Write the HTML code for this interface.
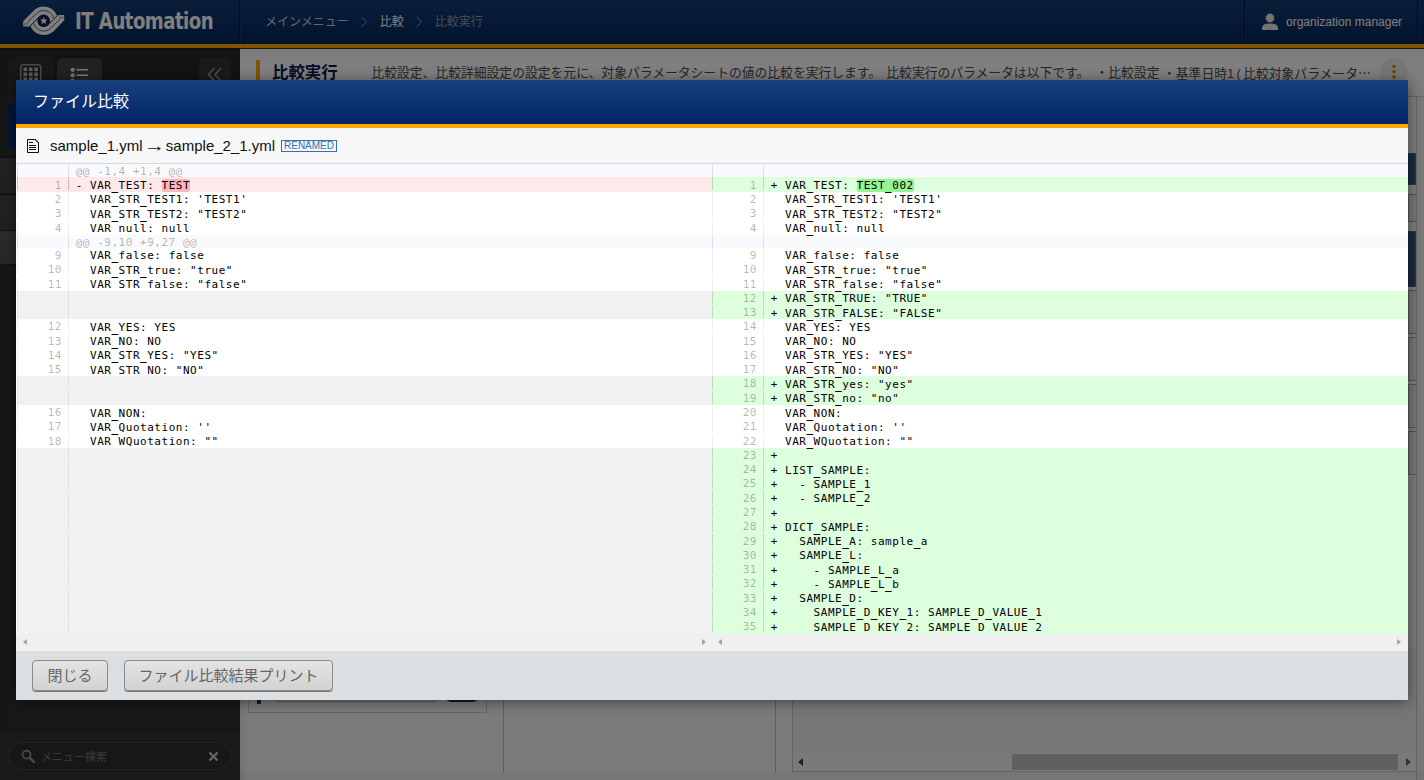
<!DOCTYPE html>
<html lang="ja">
<head>
<meta charset="utf-8">
<title>IT Automation - 比較実行</title>
<style>
*{box-sizing:border-box;margin:0;padding:0}
html,body{width:1424px;height:780px;overflow:hidden;background:#f2f2f2;font-family:"Liberation Sans","Noto Sans CJK JP",sans-serif;}
#page{position:relative;width:1424px;height:780px;overflow:hidden}
/* ---------- background application ---------- */
#hdr{position:absolute;left:0;top:0;width:1424px;height:48px;background:linear-gradient(#163e74,#02265e 44px);border-bottom:4px solid #ffaa00}
#hdr .logoBox{position:absolute;left:0;top:0;width:241px;height:44px;border-right:1px solid #1a3868;box-shadow:inset -2px 0 0 -1px #011a40}
#hdr .logoTxt{position:absolute;left:75px;top:7px;font:bold 23px/28px "DejaVu Sans Condensed","Liberation Sans",sans-serif;color:#fff;letter-spacing:-.6px;white-space:nowrap;transform-origin:0 50%;transform:scaleX(.877)}
#crumb{position:absolute;left:265px;top:12px;font-size:12px;line-height:20px;color:#c8d0dc;white-space:nowrap}
#crumb span{display:inline-block;vertical-align:top}
#crumb .sep{margin:4px 12px 0 11px;height:12px;line-height:0}
#crumb .cur{color:#8d9ab2}
#crumb .mid{color:#fff}
#user{position:absolute;left:1244px;top:0;width:174px;height:44px;border-left:1px solid #011a40;border-right:1px solid #011a40;box-shadow:inset 1px 0 0 #1a3868,1px 0 0 #1a3868}
#user .nm{position:absolute;left:41px;top:13px;font-size:12px;line-height:18px;color:#fff;white-space:nowrap}
#side{position:absolute;left:0;top:48px;width:240px;height:732px;background:#282828}
#side .topbar{position:absolute;left:0;top:0;width:240px;height:49px;background:#262626;border-top:1px solid #161616}
#side .tb{position:absolute;top:10px;height:40px;width:45px;border-radius:5px 5px 0 0}
#side .menu{position:absolute;left:0;top:49px;width:240px;height:636px;background:linear-gradient(90deg,#2a2a2a,#303030 12px)}
#side .nv{position:absolute;left:8px;top:57px;width:224px;height:43px;background:#002a6c}
#side .mi{position:absolute;left:0;top:0;width:240px;height:36px;background:linear-gradient(#464646,#404040);border-top:1px solid #1c1c1c}
#side .mi.on{background:linear-gradient(#585858,#505050);height:35px;border-bottom:1px solid #222}
#side .sfoot{position:absolute;left:0;top:684px;width:240px;height:48px;background:#343434}
#side .search{position:absolute;left:8px;top:694px;width:223px;height:28px;border:1px solid #464646;border-radius:14px;background:#2e2e2e}
#side .search .ph{position:absolute;left:32px;top:5px;font-size:11px;line-height:18px;color:#777}
#main{position:absolute;left:240px;top:48px;width:1184px;height:732px;background:#f6f6f6}
#main .lsh{position:absolute;left:0;top:0;width:8px;height:732px;background:linear-gradient(90deg,rgba(0,0,0,.07),rgba(0,0,0,0))}
#main .chead{position:absolute;left:0;top:0;width:1184px;height:49px;background:linear-gradient(#f4f4f4,#fff 14px,#f4f4f4);border-bottom:1px solid #ccc;border-top:1px solid #2a2a2a}
#main .ttlbar{position:absolute;left:16px;top:12px;width:4px;height:30px;background:#ffaa00}
#main .ttl{position:absolute;left:32px;top:12px;font-weight:bold;font-size:16.4px;line-height:24px;color:#001a50;white-space:nowrap}
#main .desc{position:absolute;left:131.4px;top:15px;font-size:12.8px;line-height:20px;color:#4a4a4a;white-space:nowrap;width:1010px;height:20px}
#main .desc span{position:absolute;top:0}
#main .desc b{font-weight:normal;letter-spacing:2.4px}
#main .desc i{font-style:normal;font-family:"Noto Sans CJK JP",sans-serif}
#main .dots{position:absolute;left:1140px;top:10px;width:28px;height:28px;border-radius:14px;background:#ececec}
#main .dots i{display:block;width:3.4px;height:3.4px;border-radius:2px;background:#e59a00;margin:0 auto 1.7px;position:relative;top:7px}
#main .rb1{position:absolute;left:1168px;width:8px;background:#33507f;border:1px solid #4f6a96;border-left:0}
#main .rbo{position:absolute;left:1168px;width:8px;border:1px solid #aaa;border-right:0;background:#ebebeb}
#main .rcol{position:absolute;left:1176px;top:49px;width:8px;height:683px;background:#f0f0f0;border-left:1px solid #c8c8c8}
#main .box1{position:absolute;left:8px;top:600px;width:239px;height:65px;border:1px solid #ccc}
#main .nm1{position:absolute;left:17px;top:640px;width:4px;height:16px;background:#1d3c70}
#main .in1{position:absolute;left:33px;top:630px;width:165px;height:24px;border:1px solid #bbb;border-radius:4px}
#main .bt1{position:absolute;left:206px;top:630px;width:32px;height:24px;border-radius:5px;background:#333}
#main .vl{position:absolute;top:600px;width:1px;height:124px;background:#b8b8b8}
#main .rp{position:absolute;left:552px;top:600px;width:625px;height:124px;border:1px solid #c4c4c4;border-top:0;background:#ececec}
#main .rp .hs{position:absolute;left:0;bottom:0;width:623px;height:18px;background:#f5f5f5}
#main .rp .hs .th{position:absolute;left:219px;top:1px;width:386px;height:16px;background:#c1c1c1}
#main .rp .hs .a1{position:absolute;left:5px;top:5px;border:4px solid transparent;border-right:5px solid #404040;border-left:0}
#main .rp .hs .a2{position:absolute;right:5px;top:5px;border:4px solid transparent;border-left:5px solid #606060;border-right:0}
#main .bband{position:absolute;left:0;top:724px;width:1184px;height:8px;background:rgba(0,0,0,.035)}
#ovl{position:absolute;left:0;top:0;width:1424px;height:780px;background:rgba(0,0,0,.5)}
/* ---------- modal ---------- */
#modal{position:absolute;left:16px;top:80px;width:1392px;height:620px;background:#f0f0f0;box-shadow:0 2px 12px rgba(0,0,0,.45)}
#mh{position:absolute;left:0;top:0;width:1392px;height:48px;background:linear-gradient(#18407a,#00246a 44px);border-bottom:4px solid #ffa500}
#mh .t{position:absolute;left:17px;top:10px;font-size:16px;line-height:24px;color:#fff;white-space:nowrap}
#fh{position:absolute;left:0;top:48px;width:1392px;height:36px;background:#f7f7f7;border-bottom:1px solid #d8d8d8}
#fh svg{position:absolute;left:11px;top:10px}
#fh .fn{position:absolute;left:34px;top:8px;font:15px/20px "Liberation Sans",sans-serif;color:#111;white-space:nowrap}
#fh .arw{display:inline-block;transform:scale(1.42,1.25);transform-origin:50% 62%}
#fh .tag{position:absolute;left:265px;top:12px;height:12px;border:1px solid #3572b0;color:#3572b0;font:10px/10px "Liberation Sans",sans-serif;padding:0 2px;white-space:nowrap}
.pane{position:absolute;z-index:0;top:83.86px;height:470.14px;overflow:hidden;background:#fff;font:11px/14.2857px "DejaVu Sans Mono","Liberation Mono",monospace;letter-spacing:.526px;color:#000}
#pl{left:0;width:696px;padding-left:1px}
#pr{left:696px;width:696px}
.r{position:relative;height:14.2857px;white-space:pre}
.r .ln{position:absolute;left:0;top:0;width:52px;height:13px;border:solid #eee;border-width:0 1px;color:rgba(0,0,0,.3);font-weight:normal;text-align:right;padding-right:6px;line-height:14.2857px;overflow:visible;padding-top:1px}
.r .cd{position:absolute;left:58.7px;top:1.5px;line-height:14.2857px}
.r.del{background:#fee8e9}.r.del .ln{border-color:#e9aeae}
.r.ins{background:#dfd}.r.ins .ln{border-color:#b4e2b4}
.r.emp{background:#f1f1f1}.r.emp .ln{border-color:#e1e1e1}
.r.info{color:rgba(0,0,0,.3)}
.r.info{height:13.14px;background:#f8fafd}
.r.info .ln{border-color:#d5e4f2;height:13.14px}
.r.info .cd{top:1.25px}
.r.del,.r.ins.first{height:15px}
.r.del .cd,.r.ins.first .cd{top:2.5px}
.r.del .ln,.r.ins.first .ln{padding-top:1.6px}
u{text-decoration:none;position:relative;top:1px;font-weight:bold}
.r .cd{z-index:1}
#pl .r.info,#pl .r.emp{z-index:2}
del{text-decoration:none;background:#ffb6ba;border-radius:.2em}
ins{text-decoration:none;background:#97f295;border-radius:.2em}
#sb{position:absolute;left:0;top:554px;width:1392px;height:17px;background:#f0f0f0}
.ar{position:absolute;top:5px;width:0;height:0;border:3.5px solid transparent}
.ar.l{border-right:4px solid #a3a3a3;border-left:0}
.ar.rr{border-left:4px solid #a3a3a3;border-right:0}
#mf{position:absolute;left:0;top:571px;width:1392px;height:49px;background:#dcdfe2}
.btn{position:absolute;top:9px;height:31px;border:1px solid #8a8a8a;border-radius:4px;background:linear-gradient(#e4e4e4,#d2d2d2);box-shadow:0 1px 0 #777;color:#666;font-size:15px;line-height:29px;text-align:center;white-space:nowrap}
</style>
</head>
<body>
<div id="page">
  <div id="hdr">
    <div class="logoBox"></div>
    <svg style="position:absolute;left:0;top:0" width="90" height="44" viewBox="0 0 90 44">
      <g>
        <path d="M36.42 13.52 A10.3 10.3 0 0 1 51.59 27.42" fill="none" stroke="#0d2556" stroke-width="9.4"/>
        <path d="M36.42 13.52 A10.3 10.3 0 0 1 51.59 27.42" fill="none" stroke="#fff" stroke-width="8"/>
        <path d="M36.42 13.52 A10.3 10.3 0 0 1 53.6 18" fill="none" stroke="#0d2556" stroke-width=".7"/>
      </g>
      <g transform="rotate(180 43.7 20.8)">
        <path d="M36.42 13.52 A10.3 10.3 0 0 1 51.59 27.42" fill="none" stroke="#0d2556" stroke-width="9.4"/>
        <path d="M36.42 13.52 A10.3 10.3 0 0 1 51.59 27.42" fill="none" stroke="#fff" stroke-width="8"/>
        <path d="M36.42 13.52 A10.3 10.3 0 0 1 53.6 18" fill="none" stroke="#0d2556" stroke-width=".7"/>
      </g>
      <g>
        <path d="M26.1 23.84 L36.6 13.34" fill="none" stroke="#0d2556" stroke-width="9.4"/>
        <path d="M22.6 20.8h5.8l1.3 6.1H22.9z" fill="#0d2556"/>
        <path d="M26.1 23.84 L36.9 13.04" fill="none" stroke="#fff" stroke-width="8"/>
        <path d="M23 21.2h5.2l1.2 5.3H23.3z" fill="#fff"/>
        <path d="M27.5 22.44 L36.7 13.24" fill="none" stroke="#0d2556" stroke-width=".7"/>
        <path d="M24.3 23.2h1.3v1.6h-1.3zM26.6 23.2h1.3v1.6h-1.3z" fill="#0d2556" opacity=".55"/>
      </g>
      <g transform="rotate(180 43.7 20.8)">
        <path d="M26.1 23.84 L36.6 13.34" fill="none" stroke="#0d2556" stroke-width="9.4"/>
        <path d="M22.6 20.8h5.8l1.3 6.1H22.9z" fill="#0d2556"/>
        <path d="M26.1 23.84 L36.9 13.04" fill="none" stroke="#fff" stroke-width="8"/>
        <path d="M23 21.2h5.2l1.2 5.3H23.3z" fill="#fff"/>
        <path d="M27.5 22.44 L36.7 13.24" fill="none" stroke="#0d2556" stroke-width=".7"/>
        <path d="M24.3 23.2h1.3v1.6h-1.3zM26.6 23.2h1.3v1.6h-1.3z" fill="#0d2556" opacity=".55"/>
      </g>
      <circle cx="43.7" cy="20.8" r="5.9" fill="#0c2454"/>
      <path d="M43.7 17.1l1.05 2.45 2.65.2-2.02 1.72.64 2.58-2.32-1.4-2.32 1.4.64-2.58-2.02-1.72 2.65-.2z" fill="#fff"/>
    </svg>
    <div class="logoTxt">IT Automation</div>
    <div id="crumb"><span>メインメニュー</span><span class="sep"><svg width="8" height="12" viewBox="0 0 8 12"><path d="M1.5 1l5 5-5 5" fill="none" stroke="#5d6f90" stroke-width="1.3"/></svg></span><span class="mid">比較</span><span class="sep"><svg width="8" height="12" viewBox="0 0 8 12"><path d="M1.5 1l5 5-5 5" fill="none" stroke="#5d6f90" stroke-width="1.3"/></svg></span><span class="cur">比較実行</span></div>
    <div id="user">
      <svg style="position:absolute;left:16px;top:13px" width="18" height="18" viewBox="0 0 18 18"><circle cx="9" cy="5" r="4.4" fill="#e6e6e6"/><path d="M1 17 V15 Q1 10.6 9 10.6 Q17 10.6 17 15 V17 Z" fill="#e6e6e6"/></svg>
      <div class="nm">organization manager</div>
    </div>
  </div>
  <div id="side">
    <div class="topbar"></div>
    <div class="tb" style="left:8px;top:9px;background:#2e2e2e;border:1px solid #333"></div>
    <div class="tb" style="left:57px;background:#424242"></div>
    <div class="tb" style="left:199px;width:32px;background:#353535"></div>
    <svg style="position:absolute;left:20px;top:16px" width="22" height="26" viewBox="0 0 22 26"><rect x=".75" y=".75" width="20" height="24" rx="2.5" fill="none" stroke="#9a9080" stroke-width="1.5"/><g fill="#b8b8b8"><rect x="3.5" y="3.5" width="3.6" height="3.6"/><rect x="8.9" y="3.5" width="3.6" height="3.6"/><rect x="14.3" y="3.5" width="3.6" height="3.6"/><rect x="3.5" y="8.5" width="3.6" height="3.6"/><rect x="8.9" y="8.5" width="3.6" height="3.6"/><rect x="14.3" y="8.5" width="3.6" height="3.6"/><rect x="3.5" y="13.5" width="3.6" height="3.6"/><rect x="8.9" y="13.5" width="3.6" height="3.6"/><rect x="14.3" y="13.5" width="3.6" height="3.6"/></g></svg>
    <svg style="position:absolute;left:70px;top:19px" width="20" height="20" viewBox="0 0 20 20"><g fill="#e8e8e8"><circle cx="2.6" cy="2.8" r="2.1"/><circle cx="2.6" cy="8.3" r="2.1"/><circle cx="2.6" cy="13.8" r="2.1"/><rect x="6.4" y="1.9" width="11.8" height="1.6"/><rect x="6.4" y="7.4" width="11.8" height="1.6"/><rect x="6.4" y="12.9" width="11.8" height="1.6"/></g></svg>
    <svg style="position:absolute;left:207px;top:19px" width="16" height="16" viewBox="0 0 16 16"><path d="M7.5 1L1.5 7.5l6 6.5M14 1L8 7.5l6 6.5" fill="none" stroke="#8d96a8" stroke-width="1.6"/></svg>
    <div class="menu"></div>
    <div class="nv"></div>
    <div class="mi" style="top:109px"></div><div class="mi" style="top:146px"></div><div class="mi on" style="top:182px"></div>
    <div class="sfoot"></div>
    <div class="search"><svg style="position:absolute;left:12px;top:6px" width="15" height="15" viewBox="0 0 15 15"><circle cx="5.6" cy="5.6" r="4" fill="none" stroke="#999" stroke-width="1.6"/><path d="M8.6 8.6l4.6 4.6" stroke="#999" stroke-width="2.2" stroke-linecap="round"/></svg><div class="ph">メニュー検索</div><svg style="position:absolute;left:199px;top:8px" width="11" height="11" viewBox="0 0 11 11"><path d="M1.5 1.5l8 8M9.5 1.5l-8 8" stroke="#c8c8c8" stroke-width="2.4"/></svg></div>
  </div>
  <div id="main">
    <div class="lsh"></div>
    <div class="chead"></div>
    <div class="ttlbar"></div>
    <div class="ttl">比較実行</div>
    <div class="desc"><span style="left:0">比較設定、比較詳細設定の設定を元に、対象パラメータシートの値の比較を実行します。</span><span style="left:514.9px">比較実行のパラメータは以下です。</span><span style="left:724.1px">・比較設定</span><span style="left:791.6px">・基準日時<b>1(</b>比較対象パラメータ<i>…</i></span></div>
    <div class="dots"><i></i><i></i><i></i></div>
    <div class="rb1" style="top:105px;height:32px"></div>
    <div class="rbo" style="top:146px;height:28px"></div>
    <div class="rb1" style="top:183px;height:56px"></div>
    <div class="rbo" style="top:242px;height:44px"></div>
    <div class="rbo" style="top:289px;height:44px"></div>
    <div class="rbo" style="top:336px;height:44px"></div>
    <div class="rbo" style="top:383px;height:44px"></div>
    <div class="rcol"></div>
    <div class="box1"></div><div class="nm1"></div><div class="in1"></div><div class="bt1"></div>
    <div class="vl" style="left:263px"></div><div class="vl" style="left:535px"></div>
    <div class="rp"><div class="hs"><i class="th"></i><b class="a1"></b><b class="a2"></b></div></div>
    <div class="bband"></div>
  </div>
  <div id="ovl"></div>

  <div id="modal">
    <div id="mh"><div class="t">ファイル比較</div></div>
    <div id="fh">
      <svg width="12" height="16" viewBox="0 0 12 16"><path fill="#111" d="M6 5H2V4h4v1zM2 8h7V7H2v1zm0 2h7V9H2v1zm0 2h7v-1H2v1zm10-7.5V14c0 .55-.45 1-1 1H1c-.55 0-1-.45-1-1V2c0-.55.45-1 1-1h7.5L12 4.5zM11 5L8 2H1v12h10V5z"/></svg>
      <div class="fn">sample_1.yml <span class="arw">→</span> sample_2_1.yml</div>
      <div class="tag">RENAMED</div>
    </div>
    <div class="pane" id="pl">
<div class="r info"><b class="ln"></b><span class="cd">@@ -1,4 +1,4 @@</span></div>
<div class="r del"><b class="ln">1</b><span class="cd">- VAR<u>_</u>TEST: <del>TEST</del></span></div>
<div class="r ctx"><b class="ln">2</b><span class="cd">  VAR<u>_</u>STR<u>_</u>TEST1: 'TEST1'</span></div>
<div class="r ctx"><b class="ln">3</b><span class="cd">  VAR<u>_</u>STR<u>_</u>TEST2: &quot;TEST2&quot;</span></div>
<div class="r ctx"><b class="ln">4</b><span class="cd">  VAR<u>_</u>null: null</span></div>
<div class="r info"><b class="ln"></b><span class="cd">@@ -9,10 +9,27 @@</span></div>
<div class="r ctx"><b class="ln">9</b><span class="cd">  VAR<u>_</u>false: false</span></div>
<div class="r ctx"><b class="ln">10</b><span class="cd">  VAR<u>_</u>STR<u>_</u>true: &quot;true&quot;</span></div>
<div class="r ctx"><b class="ln">11</b><span class="cd">  VAR<u>_</u>STR<u>_</u>false: &quot;false&quot;</span></div>
<div class="r emp"><b class="ln"></b></div>
<div class="r emp"><b class="ln"></b></div>
<div class="r ctx"><b class="ln">12</b><span class="cd">  VAR<u>_</u>YES: YES</span></div>
<div class="r ctx"><b class="ln">13</b><span class="cd">  VAR<u>_</u>NO: NO</span></div>
<div class="r ctx"><b class="ln">14</b><span class="cd">  VAR<u>_</u>STR<u>_</u>YES: &quot;YES&quot;</span></div>
<div class="r ctx"><b class="ln">15</b><span class="cd">  VAR<u>_</u>STR<u>_</u>NO: &quot;NO&quot;</span></div>
<div class="r emp"><b class="ln"></b></div>
<div class="r emp"><b class="ln"></b></div>
<div class="r ctx"><b class="ln">16</b><span class="cd">  VAR<u>_</u>NON:</span></div>
<div class="r ctx"><b class="ln">17</b><span class="cd">  VAR<u>_</u>Quotation: ''</span></div>
<div class="r ctx"><b class="ln">18</b><span class="cd">  VAR<u>_</u>WQuotation: &quot;&quot;</span></div>
<div class="r emp"><b class="ln"></b></div>
<div class="r emp"><b class="ln"></b></div>
<div class="r emp"><b class="ln"></b></div>
<div class="r emp"><b class="ln"></b></div>
<div class="r emp"><b class="ln"></b></div>
<div class="r emp"><b class="ln"></b></div>
<div class="r emp"><b class="ln"></b></div>
<div class="r emp"><b class="ln"></b></div>
<div class="r emp"><b class="ln"></b></div>
<div class="r emp"><b class="ln"></b></div>
<div class="r emp"><b class="ln"></b></div>
<div class="r emp"><b class="ln"></b></div>
<div class="r emp"><b class="ln"></b></div>
    </div>
    <div class="pane" id="pr">
<div class="r info"><b class="ln"></b><span class="cd"></span></div>
<div class="r ins first"><b class="ln">1</b><span class="cd">+ VAR<u>_</u>TEST: <ins>TEST<u>_</u>002</ins></span></div>
<div class="r ctx"><b class="ln">2</b><span class="cd">  VAR<u>_</u>STR<u>_</u>TEST1: 'TEST1'</span></div>
<div class="r ctx"><b class="ln">3</b><span class="cd">  VAR<u>_</u>STR<u>_</u>TEST2: &quot;TEST2&quot;</span></div>
<div class="r ctx"><b class="ln">4</b><span class="cd">  VAR<u>_</u>null: null</span></div>
<div class="r info"><b class="ln"></b><span class="cd"></span></div>
<div class="r ctx"><b class="ln">9</b><span class="cd">  VAR<u>_</u>false: false</span></div>
<div class="r ctx"><b class="ln">10</b><span class="cd">  VAR<u>_</u>STR<u>_</u>true: &quot;true&quot;</span></div>
<div class="r ctx"><b class="ln">11</b><span class="cd">  VAR<u>_</u>STR<u>_</u>false: &quot;false&quot;</span></div>
<div class="r ins"><b class="ln">12</b><span class="cd">+ VAR<u>_</u>STR<u>_</u>TRUE: &quot;TRUE&quot;</span></div>
<div class="r ins"><b class="ln">13</b><span class="cd">+ VAR<u>_</u>STR<u>_</u>FALSE: &quot;FALSE&quot;</span></div>
<div class="r ctx"><b class="ln">14</b><span class="cd">  VAR<u>_</u>YES: YES</span></div>
<div class="r ctx"><b class="ln">15</b><span class="cd">  VAR<u>_</u>NO: NO</span></div>
<div class="r ctx"><b class="ln">16</b><span class="cd">  VAR<u>_</u>STR<u>_</u>YES: &quot;YES&quot;</span></div>
<div class="r ctx"><b class="ln">17</b><span class="cd">  VAR<u>_</u>STR<u>_</u>NO: &quot;NO&quot;</span></div>
<div class="r ins"><b class="ln">18</b><span class="cd">+ VAR<u>_</u>STR<u>_</u>yes: &quot;yes&quot;</span></div>
<div class="r ins"><b class="ln">19</b><span class="cd">+ VAR<u>_</u>STR<u>_</u>no: &quot;no&quot;</span></div>
<div class="r ctx"><b class="ln">20</b><span class="cd">  VAR<u>_</u>NON:</span></div>
<div class="r ctx"><b class="ln">21</b><span class="cd">  VAR<u>_</u>Quotation: ''</span></div>
<div class="r ctx"><b class="ln">22</b><span class="cd">  VAR<u>_</u>WQuotation: &quot;&quot;</span></div>
<div class="r ins"><b class="ln">23</b><span class="cd">+ </span></div>
<div class="r ins"><b class="ln">24</b><span class="cd">+ LIST<u>_</u>SAMPLE:</span></div>
<div class="r ins"><b class="ln">25</b><span class="cd">+   - SAMPLE<u>_</u>1</span></div>
<div class="r ins"><b class="ln">26</b><span class="cd">+   - SAMPLE<u>_</u>2</span></div>
<div class="r ins"><b class="ln">27</b><span class="cd">+ </span></div>
<div class="r ins"><b class="ln">28</b><span class="cd">+ DICT<u>_</u>SAMPLE:</span></div>
<div class="r ins"><b class="ln">29</b><span class="cd">+   SAMPLE<u>_</u>A: sample<u>_</u>a</span></div>
<div class="r ins"><b class="ln">30</b><span class="cd">+   SAMPLE<u>_</u>L:</span></div>
<div class="r ins"><b class="ln">31</b><span class="cd">+     - SAMPLE<u>_</u>L<u>_</u>a</span></div>
<div class="r ins"><b class="ln">32</b><span class="cd">+     - SAMPLE<u>_</u>L<u>_</u>b</span></div>
<div class="r ins"><b class="ln">33</b><span class="cd">+   SAMPLE<u>_</u>D:</span></div>
<div class="r ins"><b class="ln">34</b><span class="cd">+     SAMPLE<u>_</u>D<u>_</u>KEY<u>_</u>1: SAMPLE<u>_</u>D<u>_</u>VALUE<u>_</u>1</span></div>
<div class="r ins"><b class="ln">35</b><span class="cd">+     SAMPLE<u>_</u>D<u>_</u>KEY<u>_</u>2: SAMPLE<u>_</u>D<u>_</u>VALUE<u>_</u>2</span></div>
    </div>
    <div id="sb">
      <i class="ar l" style="left:7px"></i><i class="ar rr" style="left:686px"></i>
      <i class="ar l" style="left:702px"></i><i class="ar rr" style="left:1381px"></i>
    </div>
    <div id="mf">
      <div class="btn" style="left:16px;width:76px">閉じる</div>
      <div class="btn" style="left:108px;width:209px">ファイル比較結果プリント</div>
    </div>
  </div>
</div>
</body>
</html>
